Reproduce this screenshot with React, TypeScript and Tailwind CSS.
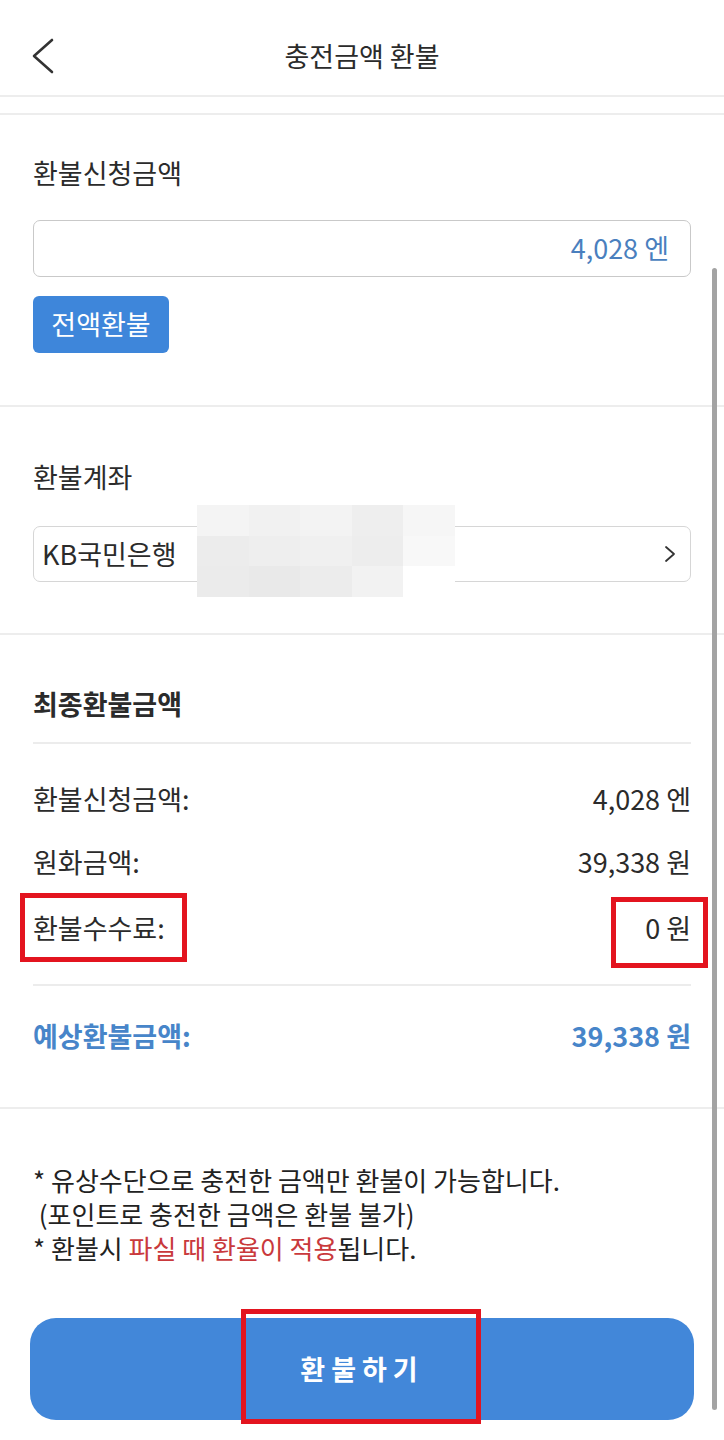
import React from 'react';

const font = { fontFamily: '"Noto Sans CJK KR", "Noto Sans", sans-serif' };

function Row({ label, value }: { label: string; value: string }) {
  return (
    <div className="flex items-center justify-between h-[36px] text-[27px] text-[#2b2b2b]">
      <span>{label}</span>
      <span>{value}</span>
    </div>
  );
}

export default function App() {
  return (
    <div className="relative w-[724px] h-[1440px] bg-white overflow-hidden" style={font}>
      {/* header */}
      <div className="relative flex justify-center pt-[36px] h-[97px] border-b-2 border-[#ededed]">
        <svg className="absolute left-[30px] top-[38px]" width="26" height="36" viewBox="0 0 26 36" fill="none">
          <path d="M22 2 L4 18 L22 34" stroke="#333" strokeWidth="2.6" strokeLinecap="round" strokeLinejoin="round" />
        </svg>
        <h1 className="text-[27px] leading-[40px] text-[#2b2b2b] font-normal">충전금액 환불</h1>
      </div>

      <div className="h-[16px]" />

      {/* refund amount */}
      <section className="border-t-2 border-[#ededed] px-[33px] pt-[40px] pb-[52px] border-b-2">
        <p className="text-[27px] leading-[36px] text-[#2b2b2b]">환불신청금액</p>
        <div className="mt-[29px] h-[57px] rounded-[7px] border border-[#c9c9c9] flex items-center justify-end pr-[21px] text-[27px] text-[#4a7fbe]">
          4,028 엔
        </div>
        <button className="mt-[19px] h-[57px] w-[136px] rounded-[6px] bg-[#3e86da] text-white text-[27px]">
          전액환불
        </button>
      </section>

      {/* account */}
      <section className="relative px-[33px] pt-[52px] pb-[51px] border-b-2 border-[#ededed]">
        <p className="text-[27px] leading-[36px] text-[#2b2b2b]">환불계좌</p>
        <div className="mt-[31px] h-[56px] rounded-[7px] border border-[#d6d6d6] flex items-center justify-between pl-[8px] pr-[14px] text-[27px] text-[#2b2b2b]">
          <span>KB국민은행</span>
          <svg width="12" height="18" viewBox="0 0 12 18" fill="none">
            <path d="M2 2 L10 9 L2 16" stroke="#333" strokeWidth="1.8" strokeLinecap="round" strokeLinejoin="round" />
          </svg>
        </div>
        {/* mosaic blur over account number */}
        <div className="absolute left-[197px] top-[98px] w-[258px] h-[92px] grid grid-cols-5 grid-rows-3">
          <div className="bg-[#f4f4f4]" />
          <div className="bg-[#f1f1f1]" />
          <div className="bg-[#f3f3f3]" />
          <div className="bg-[#eeeeee]" />
          <div className="bg-[#f6f6f6]" />
          <div className="bg-[#ececec]" />
          <div className="bg-[#eeeeee]" />
          <div className="bg-[#f0f0f0]" />
          <div className="bg-[#ededed]" />
          <div className="bg-[#f8f8f8]" />
          <div className="bg-[#ebebeb]" />
          <div className="bg-[#e9e9e9]" />
          <div className="bg-[#ececec]" />
          <div className="bg-[#f2f2f2]" />
          <div className="bg-white" />
        </div>
      </section>

      {/* final amount */}
      <section className="px-[33px] pt-[51px] pb-[53px] border-b-2 border-[#ededed]">
        <p className="text-[27px] leading-[36px] font-bold text-[#2b2b2b]">최종환불금액</p>
        <div className="mt-[20px] border-t-2 border-[#ececec]" />
        <div className="mt-[37px]">
          <Row label="환불신청금액:" value="4,028 엔" />
        </div>
        <div className="mt-[27px]">
          <Row label="원화금액:" value="39,338 원" />
        </div>
        <div className="relative mt-[30px]">
          <Row label="환불수수료:" value="0 원" />
          <div className="absolute left-[-13px] top-[-17px] w-[167px] h-[69px] border-[5px] border-[#e3141f]" />
          <div className="absolute right-[-17px] top-[-13px] w-[97px] h-[71px] border-[5px] border-[#e3141f]" />
        </div>
        <div className="mt-[38px] border-t-2 border-[#ececec]" />
        <div className="mt-[32px] flex items-center justify-between h-[36px] text-[27px] font-bold text-[#4785c9]">
          <span>예상환불금액:</span>
          <span>39,338 원</span>
        </div>
      </section>

      {/* notes */}
      <section className="px-[33px] pt-[54px] text-[26px] leading-[34px] text-[#222]">
        <p>* 유상수단으로 충전한 금액만 환불이 가능합니다.</p>
        <p>&nbsp;(포인트로 충전한 금액은 환불 불가)</p>
        <p>
          * 환불시 <span className="text-[#c9393c]">파실 때 환율이 적용</span>됩니다.
        </p>
      </section>

      {/* submit */}
      <div className="px-[30px] mt-[53px]">
        <button className="relative w-full h-[102px] rounded-[26px] bg-[#4287d9] text-white text-[27px] font-bold tracking-[6px]">
          환불하기
          <span className="absolute left-[211px] top-[-9px] w-[240px] h-[115px] border-[5px] border-[#e3141f]" />
        </button>
      </div>

      {/* scrollbar */}
      <div className="absolute left-[712px] top-[268px] w-[5px] h-[1142px] rounded-full bg-[#a3a3a3]" />
    </div>
  );
}
